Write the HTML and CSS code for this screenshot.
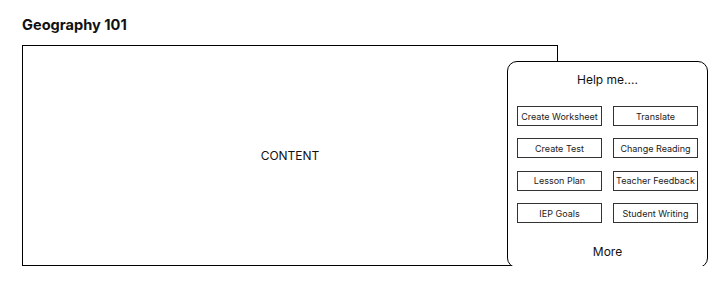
FILE: index.html
```html
<!DOCTYPE html>
<html>
<head>
    <title>Geography 101</title>
    <link rel="stylesheet" href="styles.css">
</head>
<body>

<h1 class="pageTitle">Geography 101</h1>

<div class="lessonArea">
    <div class="contentBox">CONTENT</div>

    <!-- Help me panel, sits over the content box -->
    <div class="helpPanel">
        <div class="helpTitle">Help me....</div>
        <div class="helpGrid">
            <button class="helpButton">Create Worksheet</button>
            <button class="helpButton">Translate</button>
            <button class="helpButton">Create Test</button>
            <button class="helpButton">Change Reading</button>
            <button class="helpButton">Lesson Plan</button>
            <button class="helpButton">Teacher Feedback</button>
            <button class="helpButton">IEP Goals</button>
            <button class="helpButton">Student Writing</button>
        </div>
        <div class="helpMore">More</div>
    </div>
</div>

</body>
</html>
```

FILE: styles.css
```css
/* General Styles */
body {
    margin: 0;
    padding: 18px 22px 0 22px;
    font-family: Inter, "Noto Sans", sans-serif;
    color: #111;
    background-color: #fff;
}

.pageTitle {
    margin: 0 0 13px 0;
    font-size: 14.6px;
    font-weight: 700;
    line-height: 14px;
}

.lessonArea {
    position: relative;
    width: 536px;
}

.contentBox {
    height: 219px;
    border: 1px solid #000;
    display: flex;
    align-items: center;
    justify-content: center;
    font-size: 12px;
}

/* Help Panel */
.helpPanel {
    position: absolute;
    left: 485px;
    top: 16px;
    width: 199px;
    height: 205px;
    border: 1px solid #000;
    border-radius: 10px;
    background-color: #fff;
    display: flex;
    flex-direction: column;
    align-items: center;
}

.helpTitle {
    margin-top: 10px;
    font-size: 12px;
    line-height: 16px;
}

.helpGrid {
    margin-top: 18px;
    display: grid;
    grid-template-columns: 85px 85px;
    grid-auto-rows: 20px;
    column-gap: 11px;
    row-gap: 12.4px;
}

.helpButton {
    font-family: Inter, "Noto Sans", sans-serif;
    font-size: 9px;
    color: #222;
    background-color: #fff;
    border: 1.5px solid #333;
    padding: 0;
    white-space: nowrap;
}

.helpMore {
    margin-top: 21px;
    font-size: 12px;
    line-height: 16px;
}
```
